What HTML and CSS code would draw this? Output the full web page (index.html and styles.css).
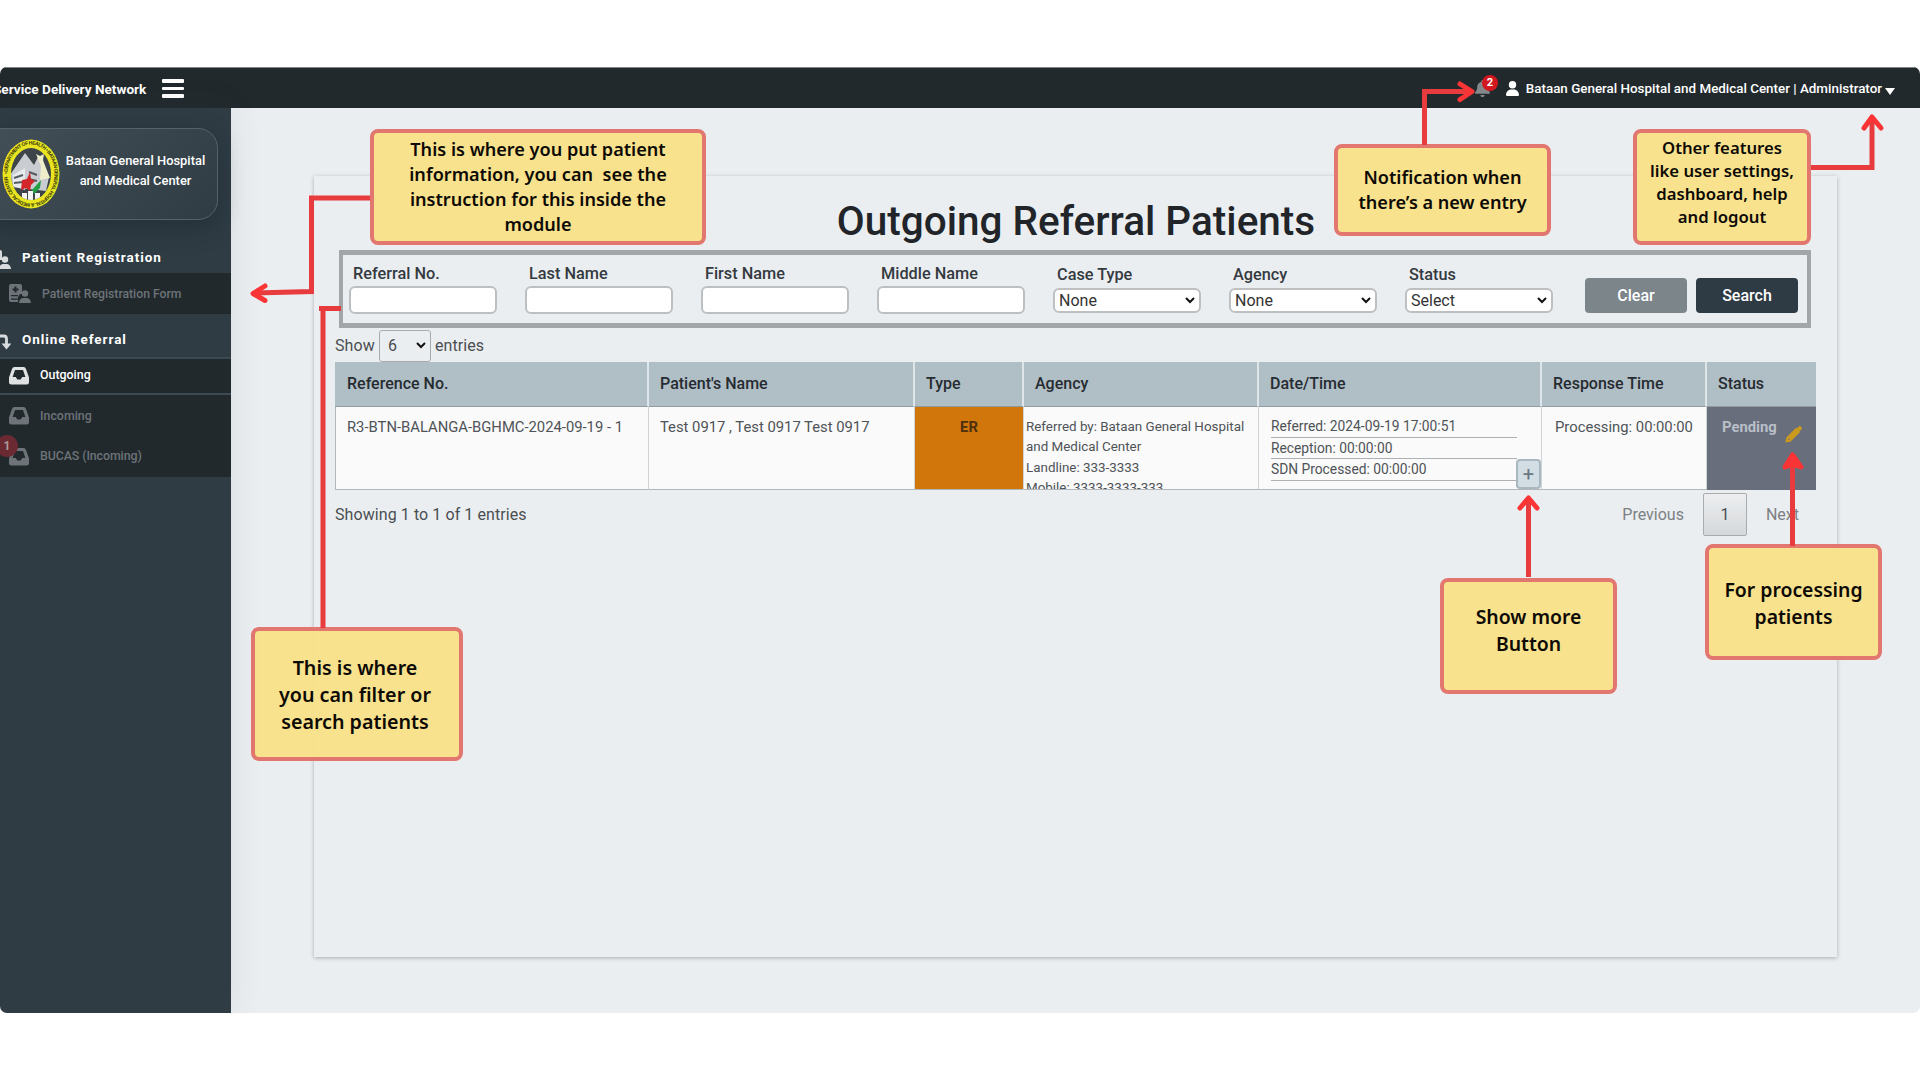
FILE: index.html
```html
<!DOCTYPE html>
<html lang="en">
<head>
<meta charset="utf-8">
<title>Service Delivery Network</title>
<link rel="stylesheet" href="styles.css">
</head>
<body>
<div class="app">
  <header class="topbar">
    <span class="brand">Service Delivery Network</span>
    <span class="burger"><i></i><i></i><i></i></span>
    <div class="account">
      <span class="bell">
        <svg width="15" height="17" viewBox="0 0 448 512"><path fill="#83888c" d="M224 0c-18 0-32 14-32 32v20C119 66 64 130 64 208v19c0 47-17 92-48 127l-8 9c-18 20-8 53 24 53h384c32 0 42-33 24-53l-8-9c-31-35-48-80-48-127v-19c0-78-55-142-128-156V32c0-18-14-32-32-32zm64 448H160c0 36 28 64 64 64s64-28 64-64z"/></svg>
        <b class="bell-count">2</b>
      </span>
      <svg class="user" width="13" height="15" viewBox="0 0 448 512"><path fill="#fff" d="M224 256a128 128 0 1 0 0-256 128 128 0 0 0 0 256zm-46 34C80 290 0 370 0 482c0 16 13 30 30 30h388c17 0 30-14 30-30 0-112-80-192-178-192z"/></svg>
      <span class="account-name">Bataan General Hospital and Medical Center | Administrator</span>
      <span class="caret"></span>
    </div>
  </header>
  <div class="body">
    <nav class="sidebar">
      <div class="hospital">
        <svg class="seal" width="58" height="70" viewBox="0 0 58 70">
          <defs><path id="ring" d="M5.5 35a23.5 29.5 0 0 1 47 0a23.5 29.5 0 0 1 -47 0"/><clipPath id="in"><ellipse cx="29" cy="35" rx="20" ry="26"/></clipPath></defs>
          <ellipse cx="29" cy="35" rx="28.5" ry="34.5" fill="#e9e520"/>
          <ellipse cx="29" cy="35" rx="20" ry="26" fill="#3d454b"/>
          <g clip-path="url(#in)">
            <path d="M8 36 23 14l9 12 4-8 3 4 8 16-3 14-36-4z" fill="#c9cdd1"/>
            <path d="m11 36 12-7v22l-12-4z" fill="#e8eaec"/>
            <path d="m12 39 9-3m-9 8 9-1m6-10 8 3m-8 4 8 2" stroke="#555d63" stroke-width="2"/>
            <path d="m34 15 4 2 4-2-1 6 3 8 4 10-10 2 1-14z" fill="#eeeecb"/>
            <path d="m20 41 5-1 3-7 1 7 4 2-4 4-1 6-4-3-5 2z" fill="#d3262a"/>
            <path d="m30 51 9-10-1 8-6 6z" fill="#23a045"/>
            <path d="M20 54h5v7h-5zm6-2h5v10h-5zm7 2h5v7h-5z" fill="#f4f4f4"/>
          </g>
          <text class="seal-text"><textPath href="#ring" textLength="164">• DEPARTMENT OF HEALTH • BATAAN GENERAL HOSPITAL &amp; MEDICAL CENTER</textPath></text>
        </svg>
        <p class="hospital-name">Bataan General Hospital<br>and Medical Center</p>
      </div>
      <div class="group group-first">
        <svg class="group-icon" width="22" height="20" viewBox="0 0 22 20"><use href="#reg"/></svg>
        <span>Patient Registration</span>
      </div>
      <div class="item item-form">
        <svg class="item-icon" width="22" height="20" viewBox="0 0 22 20"><g id="reg" fill="currentColor"><path fill-rule="evenodd" d="M2 0h9a2 2 0 0 1 2 2v8h-2l-2 3v5H2a2 2 0 0 1-2-2V2a2 2 0 0 1 2-2zm3.500 2.500v2h-2v2h2v2h2v-2h2v-2h-2v-2zM2 11v1.300h7V11zm0 3.500v1.300h7v-1.300z"/><circle cx="16" cy="9.500" r="3.200"/><path d="M10 19c0-3 2-5 4.500-5h3c2.500 0 4.500 2 4.500 5z"/></g></svg>
        <span>Patient Registration Form</span>
      </div>
      <div class="group group-second">
        <svg class="group-icon" width="22" height="16" viewBox="0 0 22 16"><path d="M1 2h14q2.500 0 2.500 3v7" fill="none" stroke="currentColor" stroke-width="2.800"/><path d="M12.500 9.500h10l-5 6z" fill="currentColor"/></svg>
        <span>Online Referral</span>
      </div>
      <div class="item item-active">
        <svg class="item-icon" width="20" height="18" viewBox="0 0 20 18"><path id="inbox" fill="currentColor" fill-rule="evenodd" d="M5.500 0h9q2 0 2.500 2l3 8.500V15.500q0 2-2.300 2H2.300Q0 17.500 0 15.500v-5L3 2Q3.500 0 5.500 0zM6 3 3.600 10h3.200l1.500 2.600h3.400L13.200 10h3.200L14 3z"/></svg>
        <span>Outgoing</span>
      </div>
      <div class="item item-incoming">
        <svg class="item-icon" width="20" height="18" viewBox="0 0 20 18"><use href="#inbox"/></svg>
        <span>Incoming</span>
      </div>
      <div class="item item-bucas">
        <svg class="item-icon" width="20" height="18" viewBox="0 0 20 18"><use href="#inbox"/></svg>
        <b class="badge">1</b>
        <span>BUCAS (Incoming)</span>
      </div>
    </nav>
    <main class="content">
      <section class="panel">
        <h1>Outgoing Referral Patients</h1>
        <form class="filters">
          <label class="field">Referral No.<span class="input"></span></label>
          <label class="field">Last Name<span class="input"></span></label>
          <label class="field">First Name<span class="input"></span></label>
          <label class="field">Middle Name<span class="input"></span></label>
          <label class="field field-select">Case Type<span class="select">None<svg class="chev" width="10" height="7" viewBox="0 0 10 7"><path d="m1 1 4 4 4-4"/></svg></span></label>
          <label class="field field-select">Agency<span class="select">None<svg class="chev" width="10" height="7" viewBox="0 0 10 7"><path d="m1 1 4 4 4-4"/></svg></span></label>
          <label class="field field-select">Status<span class="select">Select<svg class="chev" width="10" height="7" viewBox="0 0 10 7"><path d="m1 1 4 4 4-4"/></svg></span></label>
          <span class="btn btn-clear">Clear</span>
          <span class="btn btn-search">Search</span>
        </form>
        <div class="length">Show <span class="length-select">6<svg class="chev" width="10" height="7" viewBox="0 0 10 7"><path d="m1 1 4 4 4-4"/></svg></span> entries</div>
        <div class="grid">
          <div class="th">Reference No.</div><div class="th">Patient's Name</div><div class="th">Type</div><div class="th">Agency</div><div class="th">Date/Time</div><div class="th">Response Time</div><div class="th">Status</div>
          <div class="td ref">R3-BTN-BALANGA-BGHMC-2024-09-19 - 1</div>
          <div class="td name">Test 0917 , Test 0917 Test 0917</div>
          <div class="td type">ER</div>
          <div class="td agency">Referred by: Bataan General Hospital<br>and Medical Center<br>Landline: 333-3333<br>Mobile: 3333-3333-333</div>
          <div class="td dates"><p>Referred: 2024-09-19 17:00:51</p><p>Reception: 00:00:00</p><p>SDN Processed: 00:00:00</p><span class="more">+</span></div>
          <div class="td resp">Processing: 00:00:00</div>
          <div class="td status">Pending<svg class="pencil" width="17" height="17" viewBox="0 0 512 512"><path fill="#c99a1e" d="m410 20c22-22 50-22 70 0l14 14c20 20 20 48 0 70l-56 56-86-86zM330 56l126 126-276 276c-8 8-18 14-29 17L12 500 37 361c3-11 9-21 17-29zM118 380l-25 50 50-25v-25z"/></svg></div>
        </div>
        <div class="foot">
          <span class="info">Showing 1 to 1 of 1 entries</span>
          <span class="prev">Previous</span><span class="page">1</span><span class="next">Next</span>
        </div>
      </section>
    </main>
  </div>
</div>

<div class="note note-form">This is where you put patient<br>information, you can&nbsp; see the<br>instruction for this inside the<br>module</div>
<div class="note note-bell">Notification when<br>there’s a new entry</div>
<div class="note note-user">Other features<br>like user settings,<br>dashboard, help<br>and logout</div>
<div class="note note-more">Show more<br>Button</div>
<div class="note note-process">For processing<br>patients</div>
<div class="note note-filter">This is where<br>you can filter or<br>search patients</div>
<svg class="arrows" width="1920" height="1080" viewBox="0 0 1920 1080">
  <path d="M370 198H311.500V291.500L254 293"/><path class="head" d="m265 286-12 7.500 12 7"/>
  <path d="M319 308.500h22M323 309v319"/>
  <path d="M1424.500 145V91.500H1470"/><path class="head" d="m1460 84 12 7.500-12 8"/>
  <path d="M1811 167.500H1872V118"/><path class="head" d="m1864 128 8-11 9 11"/>
  <path d="M1528.500 577V498"/><path class="head" d="m1520 508 8.500-10 8.500 10"/>
  <path d="M1792.500 546V460"/><path class="head filled" d="m1785 467 7.500-12 8.500 12-8.500-3z"/>
</svg>
</body>
</html>
```
FILE: styles.css
```css
* { box-sizing: border-box; }
body { margin: 0; height: 1080px; padding-top: 67px; background: #fff; font-family: Roboto, "Liberation Sans", sans-serif; position: relative; overflow: hidden; }
p, h1 { margin: 0; font-weight: inherit; }
.app { height: 946px; border-radius: 7px; overflow: hidden; background: #ebeef1; display: flex; flex-direction: column; }
.topbar { height: 41px; flex: none; background: #21292d; border-top: 1px solid #7f8588; display: flex; align-items: center; color: #fff; padding-top: 2px; }
.brand { font-size: 13.600px; font-weight: 700; margin-left: -7px; width: 153px; white-space: nowrap; }
.burger { display: flex; flex-direction: column; gap: 4px; margin-left: 16px; width: 22px; margin-top: -1px; }
.burger i { height: 3.500px; background: #fff; border-radius: 1px; }
.account { margin-left: auto; margin-right: 25px; display: flex; align-items: center; margin-top: -1px; }
.bell { position: relative; width: 15px; height: 17px; margin-right: 16px; }
.bell svg { display: block; }
.bell-count { position: absolute; left: 7px; top: -5px; width: 16px; height: 16px; border-radius: 50%; background: #d3171e; font-size: 11px; line-height: 16px; text-align: center; }
.user { margin-right: 7px; }
.account-name { font-size: 13.400px; font-weight: 500; white-space: nowrap; }
.caret { border: 5px solid transparent; border-top: 7px solid #fff; border-bottom: 0; margin: 6px 0 0 3px; }
.body { flex: 1; display: flex; min-height: 0; }
.sidebar { width: 231px; flex: none; background: #2f3c44; padding-top: 20px; color: #fff; box-shadow: 0 0 30px rgba(60,70,80,.1); z-index: 1; }
.hospital { margin-left: -20px; width: 238px; height: 92px; border: 1px solid #56626a; border-radius: 20px; background: linear-gradient(135deg, #435058, #2f3c44); box-shadow: 0 8px 24px rgba(20,30,36,.35); display: flex; align-items: center; padding-left: 21px; }
.seal { flex: none; }
.seal-text { font: 700 5px "Liberation Sans", sans-serif; fill: #33350a; }
.hospital-name { width: 151px; text-align: center; font-size: 12.900px; font-weight: 500; line-height: 20px; margin-top: -6px; white-space: nowrap; }
.group { display: flex; align-items: center; font-size: 13.500px; font-weight: 700; letter-spacing: .95px; }
.group-icon { margin: 5px 11px 0 -11px; color: #d8dbdd; }
.group-first { height: 53px; padding-top: 21px; }
.group-second { height: 43px; padding-top: 7px; }
.item { position: relative; display: flex; align-items: center; background: #21292d; color: #6d7378; font-size: 12.400px; font-weight: 500; padding-left: 9px; }
.item-form { height: 41px; font-size: 12.200px; }
.item-form .item-icon { margin-right: 11px; }
.item-active { height: 38px; color: #fff; border-top: 2px solid #3d4a52; border-bottom: 2px solid #3d4a52; }
.item-active span { margin-top: -3px; }
.item-incoming { height: 41px; }
.item-bucas { height: 41px; }
.item-bucas span { margin-top: -2px; letter-spacing: -.1px; }
.item-icon { flex: none; margin-right: 11px; }
.item-active .item-icon { color: #dfe1e2; }
.badge { position: absolute; left: -4px; top: -1px; width: 22px; height: 22px; border-radius: 50%; background: #6b2a32; color: #a99; font-size: 12px; line-height: 22px; text-align: center; }
.content { flex: 1; padding: 68px 83px 0 83px; }
.panel { height: 781px; padding: 0 20px 0 21px; box-shadow: 0 1px 4px rgba(0,0,0,.28); }
h1 { height: 74px; padding-top: 21px; font-size: 40.500px; font-weight: 500; line-height: 48px; text-align: center; color: #212529; white-space: nowrap; }
.filters { display: flex; width: 1472px; height: 78px; margin-left: 4px; border: 4px solid #a3a6a9; border-top-width: 5px; border-bottom-width: 5px; padding: 0 0 0 6px; }
.field { width: 148px; margin-right: 28px; padding: 9px 0 0 0; font-size: 16.300px; font-weight: 500; line-height: 19px; color: #343a40; text-indent: 4px; white-space: nowrap; }
.input, .select { display: flex; align-items: center; margin-top: 3px; height: 28px; border: 2px solid #bdbfc1; border-radius: 6px; background: #fff; }
.field-select { padding-top: 10px; }
.select { margin-top: 4px; height: 25px; font-size: 16px; font-weight: 400; color: #333; justify-content: space-between; padding-right: 4px; }
.chev path { fill: none; stroke: #111; stroke-width: 2; }
.btn { width: 102px; height: 35px; margin-top: 23px; border-radius: 4px; color: #fff; font-size: 16px; line-height: 35px; text-align: center; font-weight: 500; }
.btn-clear { background: #7b858a; margin-left: 4px; }
.btn-search { background: #2e3b44; margin-left: 9px; }
.length { display: flex; align-items: center; height: 34px; font-size: 16px; letter-spacing: .1px; color: #4a4e52; }
.length-select { width: 52px; height: 32px; margin: 1px 4px 0; border: 1px solid #aaa; border-radius: 3px; display: flex; align-items: center; justify-content: space-between; padding: 0 4px 0 8px; }
.grid { display: grid; width: 1481px; grid-template-columns: 314px 266px 109px 235px 283px 165px 109px; grid-template-rows: 45px 83px; }
.th { background: #b0bec5; border-right: 2px solid #dfe6ea; border-bottom: 1px solid #8f9ba1; padding-left: 11px; font-size: 16px; font-weight: 500; line-height: 44px; color: #262c31; white-space: nowrap; }
.th:first-child { padding-left: 12px; }
.th:nth-child(7) { border-right: 0; }
.td { position: relative; background: #fafafa; border-right: 1px solid #ced4d8; border-bottom: 1px solid #b0b8bd; padding: 10px 0 0 11px; font-size: 14.800px; line-height: 20px; color: #4f5357; white-space: nowrap; overflow: hidden; }
.ref { border-left: 1px solid #b0b8bd; }
.type { background: #d1760a; color: #4d300c; font-weight: 700; text-align: center; padding-left: 0; }
.agency { font-size: 13.400px; line-height: 20.300px; padding-left: 2px; }
.dates { padding-top: 9px; padding-left: 12px; }
.dates p { width: 246px; height: 21.700px; font-size: 13.800px; border-bottom: 1px solid #adb1b5; }
.more { position: absolute; right: 0; bottom: 0; width: 25px; height: 30px; border: 2px solid #a9b7c0; border-radius: 4px; background: #d2dde4; color: #6b7780; font-size: 20px; line-height: 26px; text-align: center; }
.resp { padding-left: 13px; }
.status { background: #686e7c; color: #b9bfc8; font-weight: 700; padding-left: 15px; border: 0; }
.pencil { position: absolute; left: 78px; top: 19px; }
.foot { display: flex; height: 50px; padding: 3px 18px 0 0; font-size: 16px; line-height: 43px; color: #4a4e52; }
.info { margin-right: auto; letter-spacing: .08px; }
.prev, .next { color: #7c8083; }
.page { width: 44px; height: 43px; margin: 0 19px; border: 1px solid #a9acaf; border-radius: 2px; background: linear-gradient(#eceef0, #d5d8da); text-align: center; line-height: 41px; }
.note { position: absolute; border: 4px solid #e27770; border-radius: 8px; background: rgba(249,225,135,.94); color: #0d0a05; font: 600 19.400px/27px "Noto Sans", sans-serif; text-align: center; white-space: nowrap; display: flex; align-items: center; justify-content: center; }
.note-form { left: 370px; top: 129px; width: 336px; height: 116px; font-size: 18.100px; line-height: 25px; padding-bottom: 1px; }
.note-bell { left: 1334px; top: 144px; width: 217px; height: 92px; font-size: 18.100px; line-height: 25.500px; }
.note-user { left: 1633px; top: 129px; width: 178px; height: 116px; font-size: 16.700px; line-height: 23px; padding-bottom: 10px; }
.note-more { left: 1440px; top: 578px; width: 177px; height: 116px; padding-bottom: 13px; }
.note-process { left: 1705px; top: 544px; width: 177px; height: 116px; padding-top: 1px; }
.note-filter { left: 251px; top: 627px; width: 212px; height: 134px; font-size: 19.700px; padding: 0 4px 0 0; }
.arrows { position: absolute; left: 0; top: 0; }
.arrows path { fill: none; stroke: #e83b3e; stroke-width: 5; }
.arrows .head { stroke: #fb3436; stroke-linecap: round; stroke-linejoin: round; }
.arrows .filled { fill: #fb3436; }
```
